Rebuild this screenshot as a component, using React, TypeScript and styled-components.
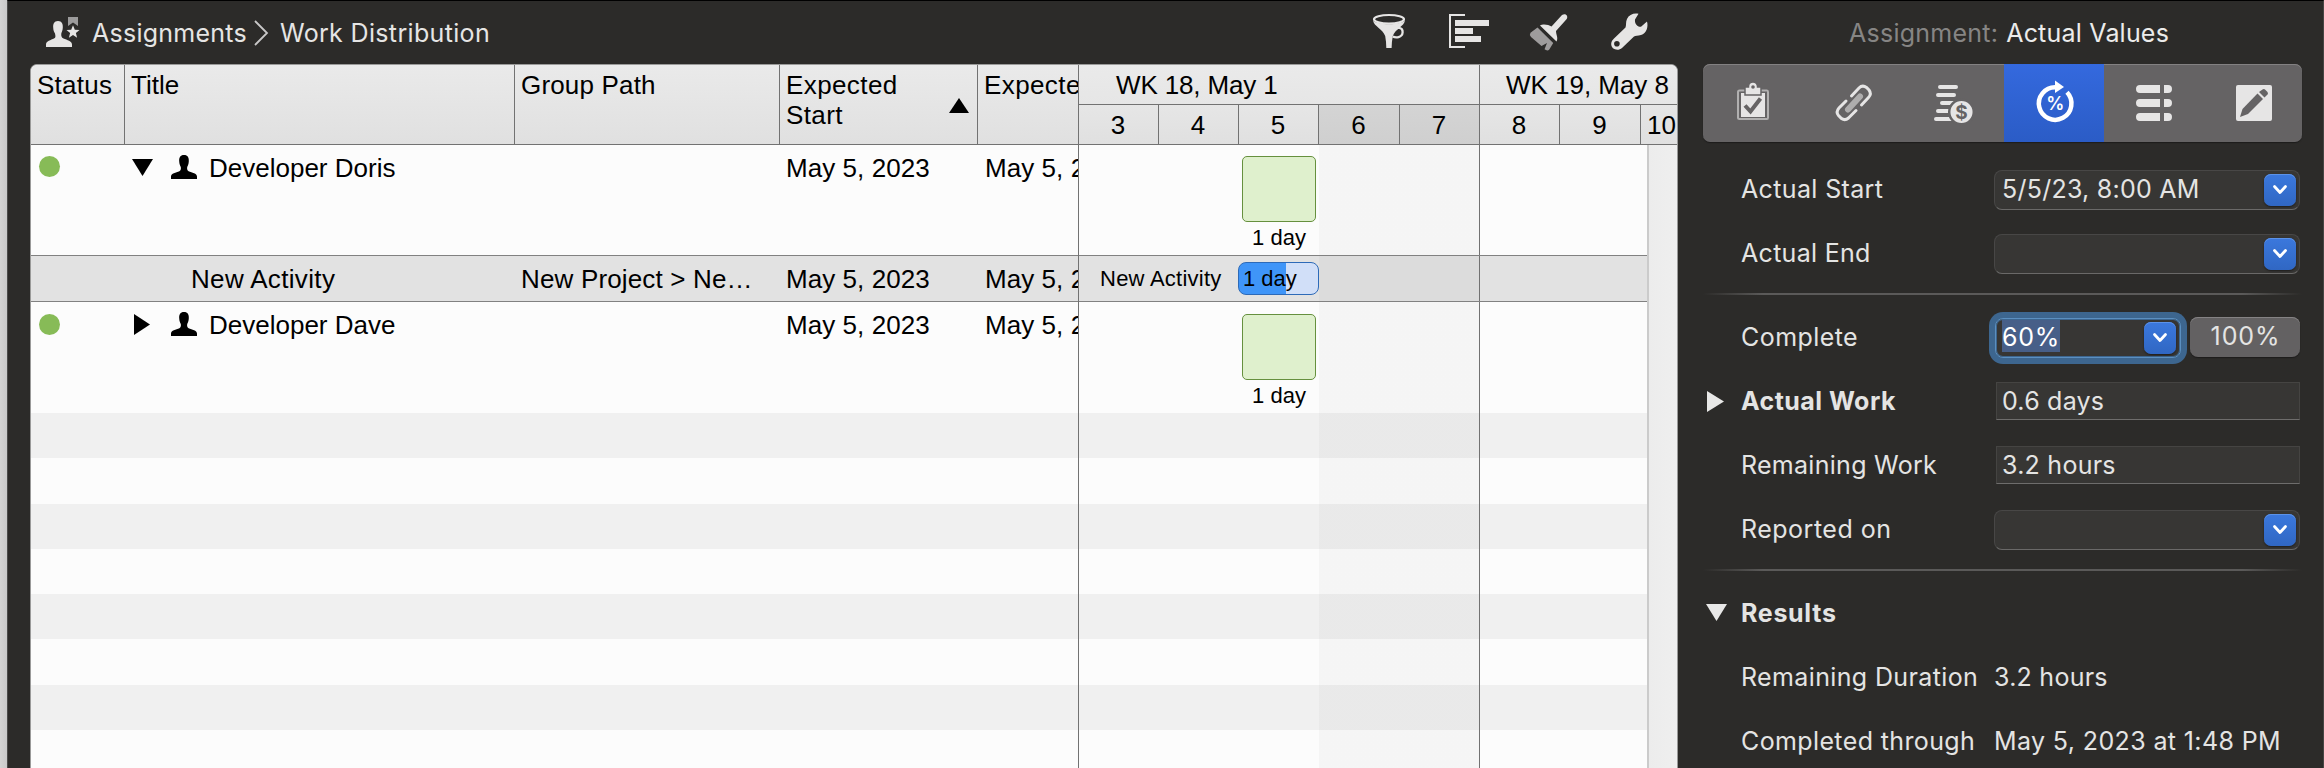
import React from 'react';
import styled, { createGlobalStyle, css } from 'styled-components';

const GlobalStyle = createGlobalStyle`
  * { box-sizing: border-box; }
  body { margin: 0; background: #d1d1d1; overflow: hidden; }
`;

const line = '#727272';
const uiFont = css`
  font-family: Inter, 'Liberation Sans', sans-serif;
  font-size: 25px;
`;

const Desktop = styled.div`
  height: 768px;
  padding-left: 7px;
  background: linear-gradient(90deg, #d4d4d4, #c9c9c9 7px);
`;

const Window = styled.div`
  display: flex;
  height: 768px;
  background: #2c2b29;
  border-top: 1px solid #000;
  border-left: 1px solid #4c4c4b;
  border-right: 1px solid #474644;
`;

const Main = styled.main`
  width: 1670px;
  display: flex;
  flex-direction: column;
  padding-left: 22px;
`;

const Toolbar = styled.header`
  ${uiFont}
  height: 63px;
  flex: none;
  padding: 1px 29px 0 14px;
  display: flex;
  align-items: center;
  justify-content: space-between;
  color: #e6e5e4;
`;

const Crumbs = styled.nav`
  display: flex;
  align-items: center;
  line-height: 32px;
`;

const Crumb = styled.span<{ $ls: number }>`
  letter-spacing: ${(p) => p.$ls}px;
  white-space: nowrap;
`;

const CrumbIcon = styled.svg`
  width: 36px;
  height: 32px;
  margin-right: 12px;
`;

const CrumbArrow = styled.svg`
  width: 16px;
  height: 28px;
  margin: 0 11px 0 6px;
`;

const Tools = styled.div`
  display: flex;
  gap: 40px;
`;

const ToolIcon = styled.svg`
  width: 40px;
  height: 40px;
  overflow: visible;
`;

const Board = styled.section`
  flex: 1;
  display: flex;
  border: 1px solid #9a9a99;
  border-bottom: 0;
  border-radius: 7px 7px 0 0;
  overflow: hidden;
  background: #fcfcfc;
  color: #000;
  font-family: 'Liberation Sans', Arial, sans-serif;
  font-size: 26px;
  line-height: 30px;
  white-space: nowrap;
`;

const Table = styled.div`
  width: 1048px;
  flex: none;
  border-right: 1px solid ${line};
  overflow: hidden;
`;

const columns = '94px 390px 265px 198px 100px';

const HeadRow = styled.div`
  display: grid;
  grid-template-columns: ${columns};
  height: 80px;
  border-bottom: 1px solid ${line};
  background: linear-gradient(#eaeaea, #e0e0e0);
`;

const HeadCell = styled.div<{ $ls?: number }>`
  display: flex;
  justify-content: space-between;
  padding: 5px 8px 0 6px;
  border-right: 1px solid ${line};
  letter-spacing: ${(p) => p.$ls ?? 0}px;
  overflow: hidden;
  &:last-child {
    border-right: 0;
    padding-right: 0;
  }
`;

const SortMark = styled.svg`
  width: 20px;
  height: 15px;
  margin-top: 28px;
`;

const rowLook = css<{ $h: number; $tone?: 'selected' | 'stripe' }>`
  height: ${(p) => p.$h}px;
  background-color: ${(p) => (p.$tone === 'selected' ? '#e2e2e2' : p.$tone === 'stripe' ? '#f0f0f0' : '#fcfcfc')};
  ${(p) => p.$tone === 'selected' && 'border: solid #818181; border-width: 1px 0;'}
`;

const Row = styled.div<{ $h: number; $tone?: 'selected' | 'stripe' }>`
  ${rowLook}
  display: grid;
  grid-template-columns: ${columns};
`;

const Cell = styled.div<{ $ls?: number; $indent?: number }>`
  padding: 8px 0 0 ${(p) => p.$indent ?? 6}px;
  letter-spacing: ${(p) => p.$ls ?? 0}px;
  overflow: hidden;
`;

const TitleCell = styled(Cell)`
  display: flex;
`;

const StatusDot = styled.div<{ $top: number }>`
  width: 21px;
  height: 21px;
  margin: ${(p) => p.$top}px 0 0 2px;
  border-radius: 50%;
  background: #87bb57;
`;

const Disclosure = styled.svg`
  width: 23px;
  height: 22px;
  margin: 4px 16px 0 1px;
`;

const Person = styled.svg`
  width: 26px;
  height: 24px;
  margin: 2px 12px 0 0;
`;

const Gantt = styled.div`
  flex: 1;
  min-width: 0;
`;

const WeekRow = styled.div`
  display: flex;
  height: 40px;
  border-bottom: 1px solid ${line};
  background: linear-gradient(#eaeaea, #e6e6e6);
`;

const Week = styled.div<{ $w: number; $ls: number; $pad: number }>`
  width: ${(p) => p.$w}px;
  flex: none;
  padding: 5px 0 0 ${(p) => p.$pad}px;
  letter-spacing: ${(p) => p.$ls}px;
  border-right: 1px solid ${line};
  &:last-child {
    border-right: 0;
  }
`;

const DayRow = styled.div`
  display: flex;
  height: 40px;
  border-bottom: 1px solid ${line};
  background: linear-gradient(#e6e6e6, #e0e0e0);
`;

const Day = styled.div<{ $w: number; $off?: boolean }>`
  width: ${(p) => p.$w}px;
  flex: none;
  padding: 5px 1px 0 0;
  text-align: center;
  border-right: 1px solid ${line};
  background: ${(p) => (p.$off ? 'linear-gradient(#d4d4d4, #cfcfcf)' : 'none')};
  &:last-child {
    border-right: 0;
    padding: 5px 0 0 6px;
    text-align: left;
  }
`;

const GanttBody = styled.div`
  display: flex;
  height: 623px;
`;

const Lanes = styled.div`
  width: 568px;
`;

const Lane = styled.div<{ $h: number; $tone?: 'selected' | 'stripe' }>`
  ${rowLook}
  background-image: linear-gradient(
    90deg,
    transparent 240px,
    rgba(0, 0, 0, 0.027) 240px,
    rgba(0, 0, 0, 0.027) 400px,
    ${line} 400px,
    ${line} 401px,
    transparent 401px
  );
  display: flex;
  font-size: 22px;
  line-height: 26px;
`;

const Gutter = styled.div`
  flex: 1;
  border-left: 2px solid #cbcbcb;
  background: linear-gradient(90deg, #ececec, #efefef);
`;

const Load = styled.div<{ $top: number }>`
  width: 74px;
  margin: ${(p) => p.$top}px 0 0 163px;
  text-align: center;
`;

const LoadBox = styled.div`
  height: 66px;
  margin-bottom: 3px;
  border: 1px solid #66903e;
  border-radius: 5px;
  background: #dff0cd;
`;

const LaneLabel = styled.div`
  width: 159px;
  padding: 10px 0 0 21px;
  letter-spacing: 0.25px;
`;

const TaskBar = styled.div<{ $done: number }>`
  width: 81px;
  height: 33px;
  margin-top: 6px;
  padding: 3px 0 0 4px;
  border: 1px solid #2d6ab8;
  border-radius: 8px;
  background: linear-gradient(90deg, #3f95f8 ${(p) => p.$done}%, #d1dff8 ${(p) => p.$done}%);
`;

const Inspector = styled.aside`
  ${uiFont}
  flex: 1;
  color: #e4e4e3;
  padding: 0 21px 0 25px;
  white-space: nowrap;
`;

const InspectorTitle = styled.h2`
  display: flex;
  gap: 8px;
  height: 63px;
  margin: 0;
  padding: 1px 0 0 146px;
  font-size: 25px;
  font-weight: 400;
  line-height: 62px;
  color: #ececeb;
`;

const Muted = styled.span`
  color: #868584;
  letter-spacing: 0.25px;
`;

const Tabs = styled.div`
  display: grid;
  grid-template-columns: 100px 101px 100px 100px 100px 98px;
  height: 78px;
  border-radius: 7px;
  overflow: hidden;
  background: #656364;
  box-shadow: 0 1px 1px #1d1c1b, inset 0 1px 0 #838182;
`;

const Tab = styled.div<{ $active?: boolean }>`
  display: flex;
  align-items: center;
  justify-content: center;
  background: ${(p) => (p.$active ? 'linear-gradient(#3469de, #2b5cc6)' : 'none')};
`;

const TabIcon = styled.svg<{ $nudge?: number }>`
  width: 44px;
  height: 44px;
  margin-left: ${(p) => p.$nudge ?? 0}px;
  overflow: visible;
`;

const Form = styled.div`
  padding-top: 16px;
`;

const FormRow = styled.div`
  display: flex;
  align-items: center;
  height: 64px;
`;

const Twisty = styled.svg`
  width: 22px;
  height: 22px;
  margin: 0 13px 0 3px;
  flex: none;
`;

const Label = styled.div<{ $ls: number; $bold?: boolean }>`
  width: 253px;
  flex: none;
  line-height: 30px;
  padding-bottom: 2px;
  letter-spacing: ${(p) => p.$ls}px;
  font-weight: ${(p) => (p.$bold ? 700 : 400)};
`;

const Value = styled.div<{ $ls: number }>`
  line-height: 30px;
  padding-bottom: 2px;
  letter-spacing: ${(p) => p.$ls}px;
`;

const Combo = styled.div<{ $focus?: boolean }>`
  display: flex;
  align-items: center;
  justify-content: space-between;
  width: ${(p) => (p.$focus ? 186 : 306)}px;
  height: 40px;
  padding: 0 3px 0 7px;
  border: 1px solid #484746;
  border-bottom-color: #6a6968;
  border-radius: 8px;
  background: #373634;
  line-height: 30px;
  ${(p) =>
    p.$focus &&
    css`
      margin-left: 1px;
      padding: 0 4px 0 6px;
      border: 1px solid #5b8fc0;
      box-shadow: 0 0 0 6px #3d668f, inset 0 0 0 1px #3d668f;
    `}
`;

const ComboText = styled.span`
  padding-bottom: 2px;
  letter-spacing: 0.25px;
`;

const Selected = styled.span`
  height: 32px;
  margin-bottom: 4px;
  line-height: 34px;
  letter-spacing: 0.8px;
  background: #475f88;
  color: #fff;
`;

const DropButton = styled.span`
  display: flex;
  align-items: center;
  justify-content: center;
  width: 32px;
  height: 32px;
  margin-left: auto;
  border-radius: 7px;
  background: linear-gradient(#3b78dd, #3067c3);
  box-shadow: inset 0 1px 0 #5c92e8, 0 1px 2px #1e1d1c;
`;

const PlainField = styled.div<{ $ls: number }>`
  width: 304px;
  height: 38px;
  margin: -2px 0 0 2px;
  padding-left: 5px;
  border: 1px solid #454442;
  border-bottom-color: #6e6d6c;
  background: #373634;
  line-height: 36px;
  letter-spacing: ${(p) => p.$ls}px;
`;

const PushButton = styled.div`
  width: 110px;
  height: 40px;
  margin: -2px 0 0 9px;
  padding-left: 1px;
  border-radius: 8px;
  background: #636162;
  box-shadow: inset 0 1px 0 #858384, 0 1px 1px #1d1c1b;
  text-align: center;
  line-height: 38px;
  letter-spacing: 0.9px;
`;

const Separator = styled.div`
  height: 2px;
  margin: 7px 0 11px;
  background: linear-gradient(90deg, transparent, #5b5a59 10%, #5b5a59 90%, transparent);
`;

const personPath =
  'M13 0C16.8 0 18 2.6 17.8 6.2C17.7 9.4 16.8 10.4 16.2 12C15.9 14 16.2 15.5 17.6 16.2C21 17.6 26 18.3 26 21.5V24H0V21.5C0 18.3 5 17.6 8.4 16.2C9.8 15.5 10.1 14 9.8 12C9.2 10.4 8.3 9.4 8.2 6.2C8 2.6 9.2 0 13 0Z';

function Drop() {
  return (
    <DropButton>
      <svg width="16" height="12" viewBox="0 0 16 12">
        <path d="M2.5 2.5L8 8.5L13.5 2.5" fill="none" stroke="#fff" strokeWidth="2.8" strokeLinecap="round" strokeLinejoin="round" />
      </svg>
    </DropButton>
  );
}

function Resource({ name, open }: { name: string; open?: boolean }) {
  return (
    <TitleCell>
      <Disclosure viewBox="0 0 23 22">
        <path d={open ? 'M0 2H21L10.5 19Z' : 'M2 0L18 10.5L2 21Z'} />
      </Disclosure>
      <Person viewBox="0 0 26 24">
        <path d={personPath} />
      </Person>
      {name}
    </TitleCell>
  );
}

function DateCells() {
  return (
    <>
      <Cell $ls={0.06}>May 5, 2023</Cell>
      <Cell $ls={0.06} $indent={7}>
        May 5, 2023
      </Cell>
    </>
  );
}

const stripes = [45, 46, 45, 45, 45, 46, 45, 38];

const days = [
  { n: 3, w: 80 },
  { n: 4, w: 80 },
  { n: 5, w: 80 },
  { n: 6, w: 81, off: true },
  { n: 7, w: 80, off: true },
  { n: 8, w: 80 },
  { n: 9, w: 81 },
  { n: 10, w: 37 },
];

export default function App() {
  return (
    <Desktop>
      <GlobalStyle />
      <Window>
        <Main>
          <Toolbar>
            <Crumbs>
              <CrumbIcon viewBox="0 0 36 32" fill="#e6e5e4">
                <path d="M14 4C18 4 19 7 18.800 10.500C18.700 13.500 17.800 15 17.300 16.500C17 19 17.500 20.500 19.500 21.500C23 23 28 24 28 27.500V30H2V27.500C2 24 7 23 10 21.500C12 20.500 11.500 19 11 16.500C10 15 9.300 13.500 9.200 10.500C9 7 10 4 14 4Z" />
                <path d="M24 0H34V9L29 5.500L24 9Z" fill="#9c9b9b" />
                <path d="M29 8.200L30.800 12.700L35.500 13L31.900 16L33.100 20.700L29 18.100L24.900 20.700L26.100 16L22.500 13L27.200 12.700Z" />
              </CrumbIcon>
              <Crumb $ls={0.25}>Assignments</Crumb>
              <CrumbArrow viewBox="0 0 16 28">
                <path d="M2 2L14 14L2 26" fill="none" stroke="#c9c8c8" strokeWidth="1.800" />
              </CrumbArrow>
              <Crumb $ls={0.34}>Work Distribution</Crumb>
            </Crumbs>
            <Tools>
              <ToolIcon viewBox="0 0 40 40" fill="#e6e5e4">
                <ellipse cx="20" cy="6.300" rx="15" ry="4.300" fill="none" stroke="#e6e5e4" strokeWidth="2.200" />
                <path d="M4 7.500C9 12.500 31 12.500 36 7.500C35 13.500 26.500 15.500 23.800 23C23 27 22.700 31 22.600 35H17.300C17.200 31 17 27 16.200 23C13.500 15.500 5 13.500 4 7.500Z" />
                <path d="M24.500 17.500C27 13.500 34 14 33.600 19.500C33.200 24.800 26.500 25 23.800 23.400" fill="none" stroke="#e6e5e4" strokeWidth="2.300" />
              </ToolIcon>
              <ToolIcon viewBox="0 0 40 40" fill="#e6e5e4">
                <path d="M16 2H1V34H16" fill="none" stroke="#e6e5e4" strokeWidth="2" />
                <path d="M6 7H40V13H6ZM6 15H24V21H6ZM6 23H32V29H6Z" />
              </ToolIcon>
              <ToolIcon viewBox="0 0 40 40" fill="#e6e5e4">
                <path d="M11 12.500C14 10.500 19.500 11.500 22.500 13.500L33 2C36.500 -.5 39.800 3 37.500 6.200L27 18C27 21.500 29.500 25 27.500 28.500Z" />
                <path d="M8.500 14.500L24.200 30L20.300 36.500Q18.500 38.500 15.500 36.300L18 30L12.500 33L2 24Q0 22 1.500 19.800Z" fill="#9e9c9c" />
              </ToolIcon>
              <ToolIcon viewBox="0 0 40 40" fill="#e6e5e4">
                <path
                  fillRule="evenodd"
                  d="M29.500 .8L26 6.500C25.500 10.500 28 14 32 13.800L38 8.500C39.500 14 37.500 20.500 32 22C28.500 23 26.500 22.500 25 23.500L13 35C9 38.500 2 36.500 2.200 30.800C2.300 28.500 3.500 27 5 25.500L16.500 14.500C17.500 12 16.500 9 18 6C20 1.500 25 -.3 29.500 .8ZM7.900 28A2.800 2.800 0 1 0 7.900 33.600A2.800 2.800 0 1 0 7.900 28Z"
                />
              </ToolIcon>
            </Tools>
          </Toolbar>

          <Board>
            <Table>
              <HeadRow>
                <HeadCell $ls={0.24}>Status</HeadCell>
                <HeadCell>Title</HeadCell>
                <HeadCell $ls={0.17}>Group Path</HeadCell>
                <HeadCell $ls={0.4}>
                  <span>
                    Expected
                    <br />
                    Start
                  </span>
                  <SortMark viewBox="0 0 20 15">
                    <path d="M10 0L20 15H0Z" />
                  </SortMark>
                </HeadCell>
                <HeadCell $ls={0.4}>Expected</HeadCell>
              </HeadRow>
              <Row $h={110}>
                <Cell>
                  <StatusDot $top={3} />
                </Cell>
                <Resource name="Developer Doris" open />
                <Cell />
                <DateCells />
              </Row>
              <Row $h={47} $tone="selected">
                <Cell />
                <Cell $indent={66} $ls={0.34}>
                  New Activity
                </Cell>
                <Cell $ls={0.16}>New Project &gt; Ne…</Cell>
                <DateCells />
              </Row>
              <Row $h={111}>
                <Cell>
                  <StatusDot $top={4} />
                </Cell>
                <Resource name="Developer Dave" />
                <Cell />
                <DateCells />
              </Row>
              {stripes.map((h, i) => (
                <Row key={i} $h={h} $tone={i % 2 ? undefined : 'stripe'} />
              ))}
            </Table>

            <Gantt>
              <WeekRow>
                <Week $w={401} $pad={37} $ls={-0.15}>
                  WK 18, May 1
                </Week>
                <Week $w={197} $pad={26} $ls={-0.03}>
                  WK 19, May 8
                </Week>
              </WeekRow>
              <DayRow>
                {days.map((d) => (
                  <Day key={d.n} $w={d.w} $off={d.off}>
                    {d.n}
                  </Day>
                ))}
              </DayRow>
              <GanttBody>
                <Lanes>
                  <Lane $h={110}>
                    <Load $top={11}>
                      <LoadBox />1 day
                    </Load>
                  </Lane>
                  <Lane $h={47} $tone="selected">
                    <LaneLabel>New Activity</LaneLabel>
                    <TaskBar $done={60}>1 day</TaskBar>
                  </Lane>
                  <Lane $h={111}>
                    <Load $top={12}>
                      <LoadBox />1 day
                    </Load>
                  </Lane>
                  {stripes.map((h, i) => (
                    <Lane key={i} $h={h} $tone={i % 2 ? undefined : 'stripe'} />
                  ))}
                </Lanes>
                <Gutter />
              </GanttBody>
            </Gantt>
          </Board>
        </Main>

        <Inspector>
          <InspectorTitle>
            <Muted>Assignment:</Muted>
            <Crumb $ls={0.2}>Actual Values</Crumb>
          </InspectorTitle>
          <Tabs>
            <Tab>
              <TabIcon viewBox="0 0 44 44" fill="#e6e5e5">
                <path d="M7 11V36.500Q7 38 8.500 38H36Q37 38 37 36.500V11Q37 9.500 36 9.500H8.500Q7 9.500 7 11Z" fill="none" stroke="#b1b0b0" strokeWidth="2" />
                <path d="M10 12H34V36H10Z" />
                <path d="M14 14H30V6H26.500V5.500A4.500 4.500 0 0 0 17.500 5.500V6H14Z" stroke="#656364" strokeWidth="1.500" />
                <circle cx="22" cy="6" r="1.800" fill="#656364" />
                <path d="M14 24.500L19.500 30.500L29.500 17.500" fill="none" stroke="#656364" strokeWidth="4" />
              </TabIcon>
            </Tab>
            <Tab>
              <TabIcon viewBox="0 0 44 44" fill="none" strokeWidth="3" stroke="#e6e5e5" strokeLinecap="round">
                <path d="M19.500 15L27 7Q30.500 3.500 34.500 6.500L37 9Q40 13 36.500 16.500L29.500 24" />
                <path d="M14 20L7 27Q3.500 31 6.500 34.500L9.500 37.500Q13 40 16.500 37L24 29.500" />
                <path d="M16 28.500L28 15.500" stroke="#aeadad" strokeWidth="6" />
              </TabIcon>
            </Tab>
            <Tab>
              <TabIcon viewBox="0 0 44 44" fill="#e6e5e5">
                <path d="M8 6H24M6 14H22M10 22H24M6 30H20M4 38H20" stroke="#e6e5e5" strokeWidth="4" strokeLinecap="round" fill="none" />
                <circle cx="29.500" cy="31" r="12.300" fill="#e6e5e5" stroke="#656364" strokeWidth="2.500" />
                <text x="29.500" y="38" textAnchor="middle" fontFamily="Inter, sans-serif" fontSize="19" fontWeight="700" fill="#656364">
                  $
                </text>
              </TabIcon>
            </Tab>
            <Tab $active>
              <TabIcon viewBox="0 0 44 44" fill="#fff" $nudge={2}>
                <path d="M22.500 6.200A16.300 16.300 0 1 0 34 11.300" fill="none" stroke="#fff" strokeWidth="4.500" />
                <path d="M22 -.5L31 6L22 12Z" />
                <text x="22.200" y="29" textAnchor="middle" fontFamily="Inter, sans-serif" fontSize="18" fontWeight="600">
                  %
                </text>
              </TabIcon>
            </Tab>
            <Tab>
              <TabIcon viewBox="0 0 44 44" fill="#e6e5e5">
                {[4, 18, 32].map((y) => (
                  <path key={y} transform={`translate(0 ${y})`} d="M8 0H28V8H8A4 4 0 0 1 8 0ZM32 0H36A4 4 0 0 1 36 8H32Z" />
                ))}
              </TabIcon>
            </Tab>
            <Tab>
              <TabIcon viewBox="0 0 44 44" fill="#e6e5e5" $nudge={2}>
                <rect x="4" y="4" width="36" height="36" rx="2" />
                <path d="M8 36L10.500 28L25.500 12.500L31 18L16 33Z" fill="#656364" />
                <path d="M27 11L30.500 8.500Q32 7.500 33.500 9L35.500 11Q36.500 12.500 35.500 13.500L32.500 16.500Z" fill="#656364" />
              </TabIcon>
            </Tab>
          </Tabs>

          <Form>
            <FormRow>
              <Twisty />
              <Label $ls={0.36}>Actual Start</Label>
              <Combo>
                <ComboText>5/5/23, 8:00 AM</ComboText>
                <Drop />
              </Combo>
            </FormRow>
            <FormRow>
              <Twisty />
              <Label $ls={0.3}>Actual End</Label>
              <Combo>
                <Drop />
              </Combo>
            </FormRow>
            <Separator />
            <FormRow>
              <Twisty />
              <Label $ls={0.44}>Complete</Label>
              <Combo $focus>
                <Selected>60%</Selected>
                <Drop />
              </Combo>
              <PushButton>100%</PushButton>
            </FormRow>
            <FormRow>
              <Twisty viewBox="0 0 22 22" fill="#e8e8e7">
                <path d="M1 0L18 10.500L1 21Z" />
              </Twisty>
              <Label $ls={0.46} $bold>
                Actual Work
              </Label>
              <PlainField $ls={0.22}>0.6 days</PlainField>
            </FormRow>
            <FormRow>
              <Twisty />
              <Label $ls={0.28}>Remaining Work</Label>
              <PlainField $ls={0.25}>3.2 hours</PlainField>
            </FormRow>
            <FormRow>
              <Twisty />
              <Label $ls={0.5}>Reported on</Label>
              <Combo>
                <Drop />
              </Combo>
            </FormRow>
            <Separator />
            <FormRow>
              <Twisty viewBox="0 0 22 22" fill="#e8e8e7">
                <path d="M0 1H21L10.500 18Z" />
              </Twisty>
              <Label $ls={0.7} $bold>
                Results
              </Label>
            </FormRow>
            <FormRow>
              <Twisty />
              <Label $ls={0.37}>Remaining Duration</Label>
              <Value $ls={0.25}>3.2 hours</Value>
            </FormRow>
            <FormRow>
              <Twisty />
              <Label $ls={0.38}>Completed through</Label>
              <Value $ls={0.38}>May 5, 2023 at 1:48 PM</Value>
            </FormRow>
          </Form>
        </Inspector>
      </Window>
    </Desktop>
  );
}
